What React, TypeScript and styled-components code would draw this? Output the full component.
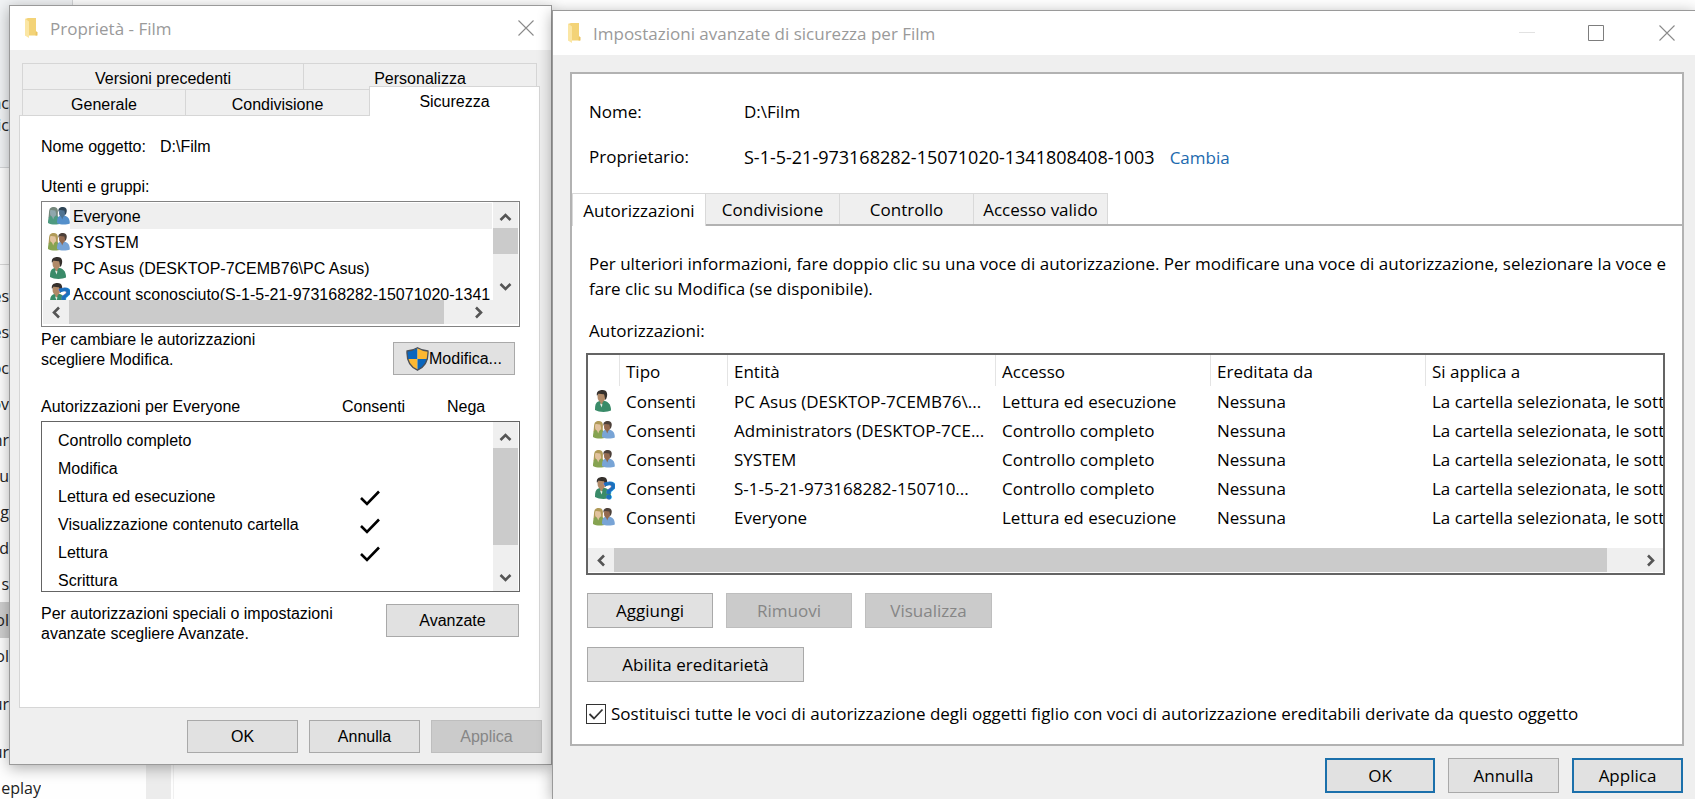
import React from 'react';
import styled, { createGlobalStyle, css } from 'styled-components';

const ARIAL = '"Liberation Sans", Arial, sans-serif';
const UI = '"Open Sans", "Segoe UI", sans-serif';

const GlobalStyle = createGlobalStyle`
  *, *::before, *::after { box-sizing: border-box; }
  body { margin: 0; background: #fdfdfd; color: #000; }
  button, input { font: inherit; color: inherit; margin: 0; }
  button { padding: 0; border: 0; background: none; }
  svg { display: block; flex: none; }
`;

/* ---------- desktop and the file manager behind the dialogs ---------- */

const Desktop = styled.main`
  position: relative;
  min-height: 100vh;
  overflow: hidden;
  background: #fefefe;
`;

const Explorer = styled.div`
  display: flex;
  font: 16px/22px ${UI};
  color: #222;
`;

const Sidebar = styled.div`
  width: 146px;
`;

const Ribbon = styled.div`
  height: 168px;
  width: 72px;
  padding-top: 92px;
  background: #f1f3f5;
  border-bottom: 1px solid #d4d6d8;
  box-shadow: 1px 0 0 #d4d6d8;
`;

const AddressArea = styled.div`
  height: 97px;
  margin-bottom: 13px;
  border-bottom: 1px solid #d9d9d9;
`;

const Fragment = styled.div<{ $wide?: boolean }>`
  display: flex;
  justify-content: flex-end;
  width: ${(p) => (p.$wide ? 41 : 9)}px;
  overflow: hidden;
  white-space: nowrap;
`;

const TreeItem = styled.div<{ $selected?: boolean; $gap?: boolean }>`
  display: flex;
  align-items: center;
  height: 36px;
  margin-top: ${(p) => (p.$gap ? 12 : 0)}px;
  background: ${(p) => (p.$selected ? '#cfcfcf' : 'transparent')};
`;

const SidebarTrack = styled.div`
  width: 25px;
  margin-top: 168px;
  background: #ececec;
`;

const ExplorerContent = styled.div`
  flex: 1;
  margin: 168px 0 0 2px;
  border-left: 1px solid #f0f0f0;
`;

/* ---------- window frame ---------- */

const frame = css`
  position: absolute;
  border: 1px solid #9a9a9a;
  background: #efefef;
  box-shadow: 0 3px 14px rgba(0, 0, 0, 0.32);
`;

const PropertiesWindow = styled.section`
  ${frame}
  left: 9px;
  top: 5px;
  width: 543px;
  font: 16px/20px ${ARIAL};
`;

const SecurityWindow = styled.section`
  ${frame}
  left: 552px;
  right: 0;
  top: 10px;
  min-height: calc(100vh - 10px);
  border-right: 0;
  border-bottom: 0;
  font: 17px/24px ${UI};
`;

const TitleBar = styled.header`
  display: flex;
  align-items: center;
  height: 44px;
  padding-left: 14px;
  background: #fff;
  color: #9a9a9a;
`;

const Title = styled.h1`
  flex: 1;
  margin: 0 0 0 12px;
  padding-top: 2px;
  font: 17px/24px ${UI};
`;

const CaptionButton = styled.button<{ $gap: number }>`
  width: 16px;
  height: 16px;
  margin-right: ${(p) => p.$gap}px;
`;

/* ---------- shared controls ---------- */

const Button = styled.button<{ $w: number; $h?: number; $primary?: boolean }>`
  display: flex;
  align-items: center;
  justify-content: center;
  width: ${(p) => p.$w}px;
  height: ${(p) => p.$h ?? 35}px;
  padding-top: ${(p) => (p.$h ? 0 : 1)}px;
  background: #e1e1e1;
  border: ${(p) => (p.$primary ? '2px solid #1b70ab' : '1px solid #a9a9a9')};

  &:disabled {
    background: #cbcbcb;
    border-color: #bebebe;
    color: #868686;
  }
`;

const Footer = styled.footer<{ $gap: number; $right?: number }>`
  display: flex;
  justify-content: flex-end;
  gap: ${(p) => p.$gap}px;
  padding: 12px ${(p) => p.$right ?? 0}px 0 0;
`;

const Bar = styled.div<{ $vertical?: boolean }>`
  display: flex;
  flex: none;
  flex-direction: ${(p) => (p.$vertical ? 'column' : 'row')};
  ${(p) => (p.$vertical ? 'width: 25px;' : 'height: 24px;')}
  background: #efefef;
`;

const BarArrow = styled.button`
  display: flex;
  flex: none;
  align-items: center;
  justify-content: center;
  width: 26px;
  height: 24px;
`;

const VBarArrow = styled(BarArrow)<{ $down?: boolean }>`
  width: 25px;
  height: 26px;
  padding: ${(p) => (p.$down ? '0 0 2px' : '4px 0 0')};
`;

const Thumb = styled.div<{ $size?: number }>`
  flex: ${(p) => (p.$size ? `0 0 ${p.$size}px` : '1')};
  background: #cbcbcb;
`;

const Track = styled.div<{ $size?: number }>`
  flex: ${(p) => (p.$size ? `0 0 ${p.$size}px` : '1')};
`;

/* ---------- properties dialog ---------- */

const PropBody = styled.div`
  padding: 13px 9px 11px;
`;

const TabRow = styled.div`
  display: flex;
  height: 26px;
  margin-left: 3px;
`;

const PropTab = styled.button<{ $w: number; $active?: boolean }>`
  flex: none;
  width: ${(p) => p.$w}px;
  height: 26px;
  padding-top: 4px;
  border: 1px solid #d6d6d6;
  border-width: 1px 0 0 1px;

  &:last-child { border-right-width: 1px; }

  ${(p) =>
    p.$active &&
    css`
      position: relative;
      height: 30px;
      margin-top: -3px;
      padding: 0;
      background: #fff;
    `}
`;

const PropPage = styled.div`
  margin-right: 2px;
  padding: 21px 19px 63px 21px;
  background: #fff;
  border: 1px solid #d6d6d6;
`;

const ObjectName = styled.div`
  display: grid;
  grid-template-columns: 119px 1fr;
  margin-bottom: 20px;
`;

const ListBox = styled.div<{ $h: number; $dark?: boolean }>`
  display: flex;
  height: ${(p) => p.$h}px;
  margin-top: 4px;
  padding: 0 1px 0 0;
  border: 1px solid ${(p) => (p.$dark ? '#646464' : '#828282')};
  overflow: hidden;
`;

const GroupsBox = styled(ListBox)`
  flex-direction: column;
  padding: 0 1px 2px 1px;
`;

const GroupsTop = styled.div`
  display: flex;
  flex: 1;
  min-height: 0;
`;

const GroupList = styled.ul`
  flex: 1;
  min-width: 0;
  margin: 0 1px 0 0;
  padding: 1px 0 0;
  list-style: none;
  overflow: hidden;
`;

const GroupItem = styled.li`
  display: flex;
  align-items: center;
  height: 26px;
  padding-left: 5px;
`;

const GroupName = styled.span<{ $selected?: boolean }>`
  flex: 1;
  height: 26px;
  padding-left: 3px;
  line-height: 28px;
  white-space: nowrap;
  overflow: hidden;
  background: ${(p) => (p.$selected ? '#efefef' : 'transparent')};
`;

const ActionRow = styled.div<{ $top: number; $right: number; $align: string }>`
  display: flex;
  align-items: ${(p) => p.$align};
  justify-content: space-between;
  margin-top: ${(p) => p.$top}px;
  padding-right: ${(p) => p.$right}px;
`;

const Note = styled.p<{ $bottom?: number }>`
  width: 300px;
  margin: 0 0 ${(p) => p.$bottom ?? 0}px;
`;

const PermHeader = styled.div`
  display: grid;
  grid-template-columns: 301px 105px 1fr;
  margin-top: 22px;
`;

const PermScroll = styled.div`
  flex: 1;
  overflow: hidden;
  padding-top: 5px;
`;

const PermTable = styled.table`
  width: 100%;
  table-layout: fixed;
  border-collapse: collapse;

  td, th {
    height: 28px;
    padding: 0;
    text-align: left;
    font-weight: 400;
  }
  td { padding-top: 2px; }
  th { width: 318px; padding-left: 16px; }
`;

/* ---------- advanced security dialog ---------- */

const SecBody = styled.div`
  padding: 17px 11px 5px 17px;
`;

const SecPanel = styled.div`
  background: #fff;
  border: 2px solid #b2b2b2;
`;

const Facts = styled.dl`
  display: grid;
  grid-template-columns: 155px 1fr;
  row-gap: 21px;
  margin: 0;
  padding: 26px 17px 23px;

  dd, dt { margin: 0; }
`;

const OwnerId = styled.span`
  font-size: 18px;
`;

const ChangeLink = styled.a`
  margin-left: 15px;
  color: #1c69ae;
  text-decoration: none;
`;

const SecTabs = styled.div`
  display: flex;
  height: 33px;
  border-bottom: 2px solid #b2b2b2;
`;

const SecTab = styled.button<{ $active?: boolean }>`
  flex: none;
  width: 134px;
  height: 31px;
  padding-top: 1px;
  background: #efefef;
  border: 1px solid #d9d9d9;
  border-width: 1px 1px 0 0;
  white-space: nowrap;

  ${(p) =>
    p.$active &&
    css`
      height: 33px;
      background: #fff;
      border-left-width: 1px;
    `}
`;

const SecContent = styled.div`
  padding: 25px 12px 18px 14px;
`;

const Intro = styled.p`
  margin: 0 0 18px;
  padding-left: 3px;
  line-height: 25px;
`;

const EntriesLabel = styled.div`
  padding-left: 3px;
`;

const EntriesBox = styled.div`
  display: flex;
  flex-direction: column;
  height: 222px;
  margin: 10px 5px 0 0;
  padding-bottom: 1px;
  border: 2px solid #646464;
`;

const EntriesView = styled.div`
  flex: 1;
  overflow: hidden;
`;

const Entries = styled.table`
  width: 100%;
  table-layout: fixed;
  border-collapse: separate;
  border-spacing: 0;

  th, td {
    height: 29px;
    padding: 0 0 0 6px;
    text-align: left;
    font-weight: 400;
    white-space: nowrap;
    overflow: hidden;
  }
  th {
    height: 32px;
    padding-top: 2px;
    background: linear-gradient(#e4e4e4, #e4e4e4) right top / 1px 31px no-repeat;
  }
  th:last-child { background: none; }
  td:first-child { padding-left: 5px; }
`;

const Buttons = styled.div<{ $top: number }>`
  display: flex;
  gap: 13px;
  margin-top: ${(p) => p.$top}px;
  padding-left: 1px;
`;

const CheckLabel = styled.label`
  display: flex;
  align-items: center;
  gap: 5px;
  margin-top: 20px;
`;

const CheckWrap = styled.span`
  position: relative;
  display: flex;

  svg {
    position: absolute;
    left: 0;
    top: 0;
    pointer-events: none;
  }
`;

const CheckBox = styled.input`
  appearance: none;
  width: 20px;
  height: 20px;
  border: 1px solid #333;
  background: #fff;
`;

/* ---------- drawings ---------- */

const Folder = () => (
  <svg width="14" height="22" viewBox="0 0 14 22" aria-hidden="true">
    <path d="M1 2 L4 1 H12 V15 L13 16 V18.500 H2 L1 18 Z" fill="#f3d377" />
    <path d="M12 14 l1.500 1.500 v3 h-2 Z" fill="#eac360" />
    <path d="M1 1.500 L5 4.500 V21 L1 18.500 Z" fill="#fbe6a4" />
  </svg>
);

const Person = ({ x, y = 0, s, hair, skin, shirt, long }: {
  x: number; y?: number; s: number; hair: string; skin: string; shirt: string; long?: boolean;
}) => (
  <g transform={`translate(${x} ${y}) scale(${s})`}>
    {long && <path d="M1.500 4.500 C1 9 1 12 0.500 14 H12.500 C12 11 12.500 8 12 4.500 Z" fill={hair} />}
    <path d="M0 20 C0 14 1 12 4.500 11 H10 C14 12.500 16 15 16 20.500 C12 22.500 4 22.500 0 20 Z" fill={shirt} />
    <path d="M4.500 10.500 H8.500 L6.500 15.500 Z" fill={skin} />
    <ellipse cx="6.500" cy="6.800" rx="4" ry="5.400" fill={skin} />
    <path d="M2 6 C1 2 3.500 0 7.500 0 C12.500 0 13.500 5 10.600 10 C9.800 9 9.800 6 9 4.200 C7 4.400 5 3.400 3.400 3.800 Z" fill={hair} />
  </g>
);

type IconKind = 'blue' | 'group' | 'user' | 'unknown';

const UserIcon = ({ kind }: { kind: IconKind }) => (
  <svg width="22" height="23" viewBox="0 0 22 23" aria-hidden="true">
    {kind === 'blue' && (
      <>
        <Person x={0} y={2} s={0.8} hair="#74877c" skin="#8ea7ad" shirt="#4e9a80" long />
        <Person x={9} y={2} s={0.8} hair="#2f4657" skin="#4f7391" shirt="#5590cb" />
      </>
    )}
    {kind === 'group' && (
      <>
        <Person x={0} y={2} s={0.8} hair="#b09a58" skin="#e2c39f" shirt="#86a351" long />
        <Person x={9} y={2} s={0.8} hair="#4c4039" skin="#936a50" shirt="#78a4d6" />
      </>
    )}
    {(kind === 'user' || kind === 'unknown') && (
      <>
        <Person x={2} s={1} hair="#35302c" skin="#b08a68" shirt="#3a8b69" />
        <path d="M7 13.500 L9.500 14.500 L8.500 17.500 Z" fill="#e8efe9" />
      </>
    )}
    {kind === 'unknown' && (
      <text x="11" y="22" fontFamily={UI} fontSize="24" fontWeight="700" fill="#1b70bd" stroke="#1b70bd" strokeWidth="1">
        ?
      </text>
    )}
  </svg>
);

const Shield = () => (
  <svg width="23" height="24" viewBox="0 0 23 24" aria-hidden="true">
    <defs>
      <clipPath id="shieldShape">
        <path d="M11.500 0.800 C8 3 5 3.800 1 4 C0.500 13 3 19.500 11.500 23.200 C20 19.500 22.500 13 22 4 C18 3.800 15 3 11.500 0.800 Z" />
      </clipPath>
    </defs>
    <g clipPath="url(#shieldShape)">
      <rect width="11.500" height="12" fill="#0a66bd" />
      <rect x="11.500" width="11.500" height="12" fill="#fdb832" />
      <rect y="12" width="11.500" height="12" fill="#fdb832" />
      <rect x="11.500" y="12" width="11.500" height="12" fill="#0a66bd" />
    </g>
    <path d="M11.500 0.800 C8 3 5 3.800 1 4 C0.500 13 3 19.500 11.500 23.200 C20 19.500 22.500 13 22 4 C18 3.800 15 3 11.500 0.800 Z" fill="none" stroke="#4b5058" strokeWidth="1.300" />
  </svg>
);

const chevrons = {
  up: 'M1.500 9 L6.500 4 L11.500 9',
  down: 'M1.500 4 L6.500 9 L11.500 4',
  left: 'M9 1.500 L4 6.500 L9 11.500',
  right: 'M4 1.500 L9 6.500 L4 11.500',
};

const Chevron = ({ to }: { to: keyof typeof chevrons }) => (
  <svg width="13" height="13" viewBox="0 0 13 13" aria-hidden="true">
    <path d={chevrons[to]} fill="none" stroke="#555" strokeWidth="2.600" />
  </svg>
);

const Tick = () => (
  <svg width="20" height="16" viewBox="0 0 20 16" aria-label="Sì">
    <path d="M1 8 L7 14 L19 1.500" fill="none" stroke="#000" strokeWidth="2.600" />
  </svg>
);

const CloseGlyph = () => (
  <svg width="16" height="16" viewBox="0 0 16 16" aria-hidden="true">
    <path d="M0.500 0.500 L15.500 15.500 M15.500 0.500 L0.500 15.500" stroke="#8a8a8a" strokeWidth="1.100" />
  </svg>
);

/* ---------- data ---------- */

const treeItems = ['es', 'es', 'oc', 'ov', 'nr', 'u', 'g', 'd', 's', 'ol', 'ol'];

const groups: { icon: IconKind; name: string }[] = [
  { icon: 'blue', name: 'Everyone' },
  { icon: 'group', name: 'SYSTEM' },
  { icon: 'user', name: 'PC Asus (DESKTOP-7CEMB76\\PC Asus)' },
  { icon: 'unknown', name: 'Account sconosciuto(S-1-5-21-973168282-15071020-1341' },
];

const permissions: [string, boolean][] = [
  ['Controllo completo', false],
  ['Modifica', false],
  ['Lettura ed esecuzione', true],
  ['Visualizzazione contenuto cartella', true],
  ['Lettura', true],
  ['Scrittura', false],
];

const entries: { icon: IconKind; who: string; access: string }[] = [
  { icon: 'user', who: 'PC Asus (DESKTOP-7CEMB76\\...', access: 'Lettura ed esecuzione' },
  { icon: 'group', who: 'Administrators (DESKTOP-7CE...', access: 'Controllo completo' },
  { icon: 'group', who: 'SYSTEM', access: 'Controllo completo' },
  { icon: 'unknown', who: 'S-1-5-21-973168282-150710...', access: 'Controllo completo' },
  { icon: 'group', who: 'Everyone', access: 'Lettura ed esecuzione' },
];

/* ---------- windows ---------- */

const FileManager = () => (
  <Explorer>
    <Sidebar>
      <Ribbon>
        <Fragment>ac</Fragment>
        <Fragment>ic</Fragment>
      </Ribbon>
      <AddressArea />
      {treeItems.map((t, i) => (
        <TreeItem key={i} $selected={i === 9}>
          <Fragment>{t}</Fragment>
        </TreeItem>
      ))}
      <TreeItem $gap><Fragment>ur</Fragment></TreeItem>
      <TreeItem $gap><Fragment>ur</Fragment></TreeItem>
      <TreeItem><Fragment $wide>eplay</Fragment></TreeItem>
    </Sidebar>
    <SidebarTrack />
    <ExplorerContent />
  </Explorer>
);

const Properties = () => (
  <PropertiesWindow aria-label="Proprietà - Film">
    <TitleBar>
      <Folder />
      <Title>Proprietà - Film</Title>
      <CaptionButton $gap={17} aria-label="Chiudi"><CloseGlyph /></CaptionButton>
    </TitleBar>
    <PropBody>
      <TabRow>
        <PropTab $w={281}>Versioni precedenti</PropTab>
        <PropTab $w={234}>Personalizza</PropTab>
      </TabRow>
      <TabRow>
        <PropTab $w={163}>Generale</PropTab>
        <PropTab $w={184}>Condivisione</PropTab>
        <PropTab $w={171} $active>Sicurezza</PropTab>
      </TabRow>
      <PropPage>
        <ObjectName>
          <span>Nome oggetto:</span>
          <span>D:\Film</span>
        </ObjectName>
        <div>Utenti e gruppi:</div>
        <GroupsBox $h={126}>
          <GroupsTop>
            <GroupList>
              {groups.map((g, i) => (
                <GroupItem key={g.name}>
                  <UserIcon kind={g.icon} />
                  <GroupName $selected={i === 0}>{g.name}</GroupName>
                </GroupItem>
              ))}
            </GroupList>
            <Bar $vertical>
              <VBarArrow aria-label="Su"><Chevron to="up" /></VBarArrow>
              <Thumb $size={26} />
              <Track />
              <VBarArrow $down aria-label="Giù"><Chevron to="down" /></VBarArrow>
            </Bar>
          </GroupsTop>
          <Bar>
            <BarArrow aria-label="Sinistra"><Chevron to="left" /></BarArrow>
            <Thumb $size={375} />
            <Track $size={21} />
            <BarArrow aria-label="Destra"><Chevron to="right" /></BarArrow>
          </Bar>
        </GroupsBox>
        <ActionRow $top={3} $right={5} $align="flex-end">
          <Note $bottom={5}>Per cambiare le autorizzazioni<br />scegliere Modifica.</Note>
          <Button $w={122} $h={33}><Shield />Modifica...</Button>
        </ActionRow>
        <PermHeader>
          <span>Autorizzazioni per Everyone</span>
          <span>Consenti</span>
          <span>Nega</span>
        </PermHeader>
        <ListBox $h={171} $dark>
          <PermScroll>
            <PermTable>
              <tbody>
                {permissions.map(([name, allowed]) => (
                  <tr key={name}>
                    <th scope="row">{name}</th>
                    <td>{allowed && <Tick />}</td>
                    <td />
                  </tr>
                ))}
              </tbody>
            </PermTable>
          </PermScroll>
          <Bar $vertical>
            <VBarArrow aria-label="Su"><Chevron to="up" /></VBarArrow>
            <Thumb $size={97} />
            <Track />
            <VBarArrow $down aria-label="Giù"><Chevron to="down" /></VBarArrow>
          </Bar>
        </ListBox>
        <ActionRow $top={12} $right={1} $align="flex-start">
          <Note>Per autorizzazioni speciali o impostazioni avanzate scegliere Avanzate.</Note>
          <Button $w={133} $h={33}>Avanzate</Button>
        </ActionRow>
      </PropPage>
      <Footer $gap={11}>
        <Button $w={111} $h={33}>OK</Button>
        <Button $w={111} $h={33}>Annulla</Button>
        <Button $w={111} $h={33} disabled>Applica</Button>
      </Footer>
    </PropBody>
  </PropertiesWindow>
);

const AdvancedSecurity = () => (
  <SecurityWindow aria-label="Impostazioni avanzate di sicurezza per Film">
    <TitleBar>
      <Folder />
      <Title>Impostazioni avanzate di sicurezza per Film</Title>
      <CaptionButton $gap={53} aria-label="Riduci a icona" disabled>
        <svg width="16" height="16" viewBox="0 0 16 16"><path d="M0 7.500 H16" stroke="#e2e2e2" /></svg>
      </CaptionButton>
      <CaptionButton $gap={55} aria-label="Ingrandisci">
        <svg width="16" height="16" viewBox="0 0 16 16"><path d="M0.500 0.500 H15.500 V15.500 H0.500 Z" fill="none" stroke="#7d7d7d" /></svg>
      </CaptionButton>
      <CaptionButton $gap={20} aria-label="Chiudi"><CloseGlyph /></CaptionButton>
    </TitleBar>
    <SecBody>
      <SecPanel>
        <Facts>
          <dt>Nome:</dt>
          <dd>D:\Film</dd>
          <dt>Proprietario:</dt>
          <dd>
            <OwnerId>S-1-5-21-973168282-15071020-1341808408-1003</OwnerId>
            <ChangeLink href="#cambia">Cambia</ChangeLink>
          </dd>
        </Facts>
        <SecTabs>
          <SecTab $active>Autorizzazioni</SecTab>
          <SecTab>Condivisione</SecTab>
          <SecTab>Controllo</SecTab>
          <SecTab>Accesso valido</SecTab>
        </SecTabs>
        <SecContent>
          <Intro>
            Per ulteriori informazioni, fare doppio clic su una voce di autorizzazione. Per modificare una voce di
            autorizzazione, selezionare la voce e fare clic su Modifica (se disponibile).
          </Intro>
          <EntriesLabel>Autorizzazioni:</EntriesLabel>
          <EntriesBox>
            <EntriesView>
              <Entries>
                <colgroup>
                  <col style={{ width: 32 }} />
                  <col style={{ width: 108 }} />
                  <col style={{ width: 268 }} />
                  <col style={{ width: 215 }} />
                  <col style={{ width: 215 }} />
                  <col />
                </colgroup>
                <thead>
                  <tr>
                    <th aria-label="Icona" />
                    <th>Tipo</th>
                    <th>Entità</th>
                    <th>Accesso</th>
                    <th>Ereditata da</th>
                    <th>Si applica a</th>
                  </tr>
                </thead>
                <tbody>
                  {entries.map((e) => (
                    <tr key={e.who}>
                      <td><UserIcon kind={e.icon} /></td>
                      <td>Consenti</td>
                      <td>{e.who}</td>
                      <td>{e.access}</td>
                      <td>Nessuna</td>
                      <td>La cartella selezionata, le sottocartelle</td>
                    </tr>
                  ))}
                </tbody>
              </Entries>
            </EntriesView>
            <Bar>
              <BarArrow aria-label="Sinistra"><Chevron to="left" /></BarArrow>
              <Thumb />
              <Track $size={30} />
              <BarArrow aria-label="Destra"><Chevron to="right" /></BarArrow>
            </Bar>
          </EntriesBox>
          <Buttons $top={18}>
            <Button $w={126}>Aggiungi</Button>
            <Button $w={126} disabled>Rimuovi</Button>
            <Button $w={127} disabled>Visualizza</Button>
          </Buttons>
          <Buttons $top={19}>
            <Button $w={217}>Abilita ereditarietà</Button>
          </Buttons>
          <CheckLabel>
            <CheckWrap>
              <CheckBox type="checkbox" defaultChecked />
              <svg width="20" height="20" viewBox="0 0 20 20" aria-hidden="true">
                <path d="M3.500 10 L8 14.500 L16.500 5.500" fill="none" stroke="#333" strokeWidth="1.800" />
              </svg>
            </CheckWrap>
            Sostituisci tutte le voci di autorizzazione degli oggetti figlio con voci di autorizzazione ereditabili derivate da questo oggetto
          </CheckLabel>
        </SecContent>
      </SecPanel>
      <Footer $gap={13} $right={1}>
        <Button $w={110} $primary>OK</Button>
        <Button $w={111}>Annulla</Button>
        <Button $w={111} $primary>Applica</Button>
      </Footer>
    </SecBody>
  </SecurityWindow>
);

export default function App() {
  return (
    <>
      <GlobalStyle />
      <Desktop>
        <FileManager />
        <Properties />
        <AdvancedSecurity />
      </Desktop>
    </>
  );
}
